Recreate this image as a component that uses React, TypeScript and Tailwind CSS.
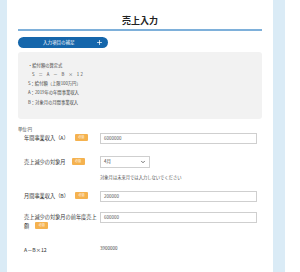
import { Plus, ChevronDown } from 'lucide-react';

const font = { fontFamily: '"Noto Sans CJK JP", "Noto Sans", sans-serif' };

function Badge() {
  return (
    <span className="inline-flex items-center justify-center w-[13px] h-[7px] bg-[#f5b24f] text-white text-[3px] leading-none rounded-[1px] align-middle">
      必須
    </span>
  );
}

function Row({ label, children, top = 'items-center' }: { label: React.ReactNode; children: React.ReactNode; top?: string }) {
  return (
    <div className={`flex ${top}`}>
      <div className="w-[82px] shrink-0 pl-[6px] text-[5.2px] text-[#333]">{label}</div>
      <div className="flex-1">{children}</div>
    </div>
  );
}

function Field({ value }: { value: string }) {
  return (
    <div className="h-[11px] w-[157px] border border-[#cfcfcf] flex items-center px-[3px] text-[4.5px] text-[#555]">
      {value}
    </div>
  );
}

export default function App() {
  return (
    <div className="flex w-[300px] h-[272px] bg-white overflow-hidden" style={font}>
      <div className="w-[7px] bg-[#daebf6]" />
      <div className="w-[266px] bg-white rounded-t-[6px] px-[11px] pt-[14px]">
        <div className="text-center text-[9px] font-bold text-[#222] leading-[13px]">売上入力</div>
        <div className="h-[1.5px] bg-[#7eb0da] mt-[2px]" />

        <div className="mt-[6px] w-[90px] h-[11px] rounded-full bg-[#1566ab] flex items-center">
          <span className="ml-[25px] text-[4.5px] text-white leading-none whitespace-nowrap">入力項目の補足</span>
          <Plus className="ml-auto mr-[5px] w-[7px] h-[7px] text-white" strokeWidth={2.5} />
        </div>

        <div className="mt-[4px] h-[67px] bg-[#f2f2f2] rounded-[3px] pl-[10px] pt-[9px] text-[4.3px] text-[#444] leading-[9.3px]">
          <div>・給付額の算定式</div>
          <div className="pl-[4px] tracking-[1.5px]">S ＝ A － B × 12</div>
          <div>S：給付額（上限100万円）</div>
          <div>A：2019年の年間事業収入</div>
          <div>B：対象月の月間事業収入</div>
        </div>

        <div className="mt-[7px] text-[4.3px] text-[#444] leading-[6px]">単位:円</div>

        <div className="mt-[1px] flex flex-col">
          <Row label={<span className="flex items-center gap-[6px]">年間事業収入（A）<Badge /></span>}>
            <Field value="6000000" />
          </Row>

          <div className="mt-[12px]">
            <Row label={<span className="flex items-center gap-[6px]">売上減少の対象月<Badge /></span>}>
              <div className="h-[12px] w-[50px] border border-[#cfcfcf] flex items-center justify-between px-[3px] text-[4.5px] text-[#444]">
                <span>4月</span>
                <ChevronDown className="w-[6px] h-[6px] text-[#444]" strokeWidth={3} />
              </div>
            </Row>
          </div>

          <div className="mt-[6px] pl-[82px] text-[4.3px] text-[#555] leading-[6px]">対象月は未来月では入力しないでください</div>

          <div className="mt-[11px]">
            <Row label={<span className="flex items-center gap-[6px]">月間事業収入（B）<Badge /></span>}>
              <Field value="200000" />
            </Row>
          </div>

          <div className="mt-[10px]">
            <Row
              top="items-start"
              label={
                <div className="leading-[9px]">
                  <div className="whitespace-nowrap">売上減少の対象月の前年度売上</div>
                  <div className="flex items-center gap-[6px]">額<Badge /></div>
                </div>
              }
            >
              <Field value="600000" />
            </Row>
          </div>

          <div className="mt-[16px] flex items-center">
            <div className="w-[82px] pl-[6px] text-[5.2px] text-[#333]">A－B×12</div>
            <div className="text-[4.5px] text-[#444] -mt-[3px]">3900000</div>
          </div>
        </div>
      </div>
      <div className="w-[12px] bg-[#daebf6]" />
      <div className="flex-1 bg-white" />
    </div>
  );
}
